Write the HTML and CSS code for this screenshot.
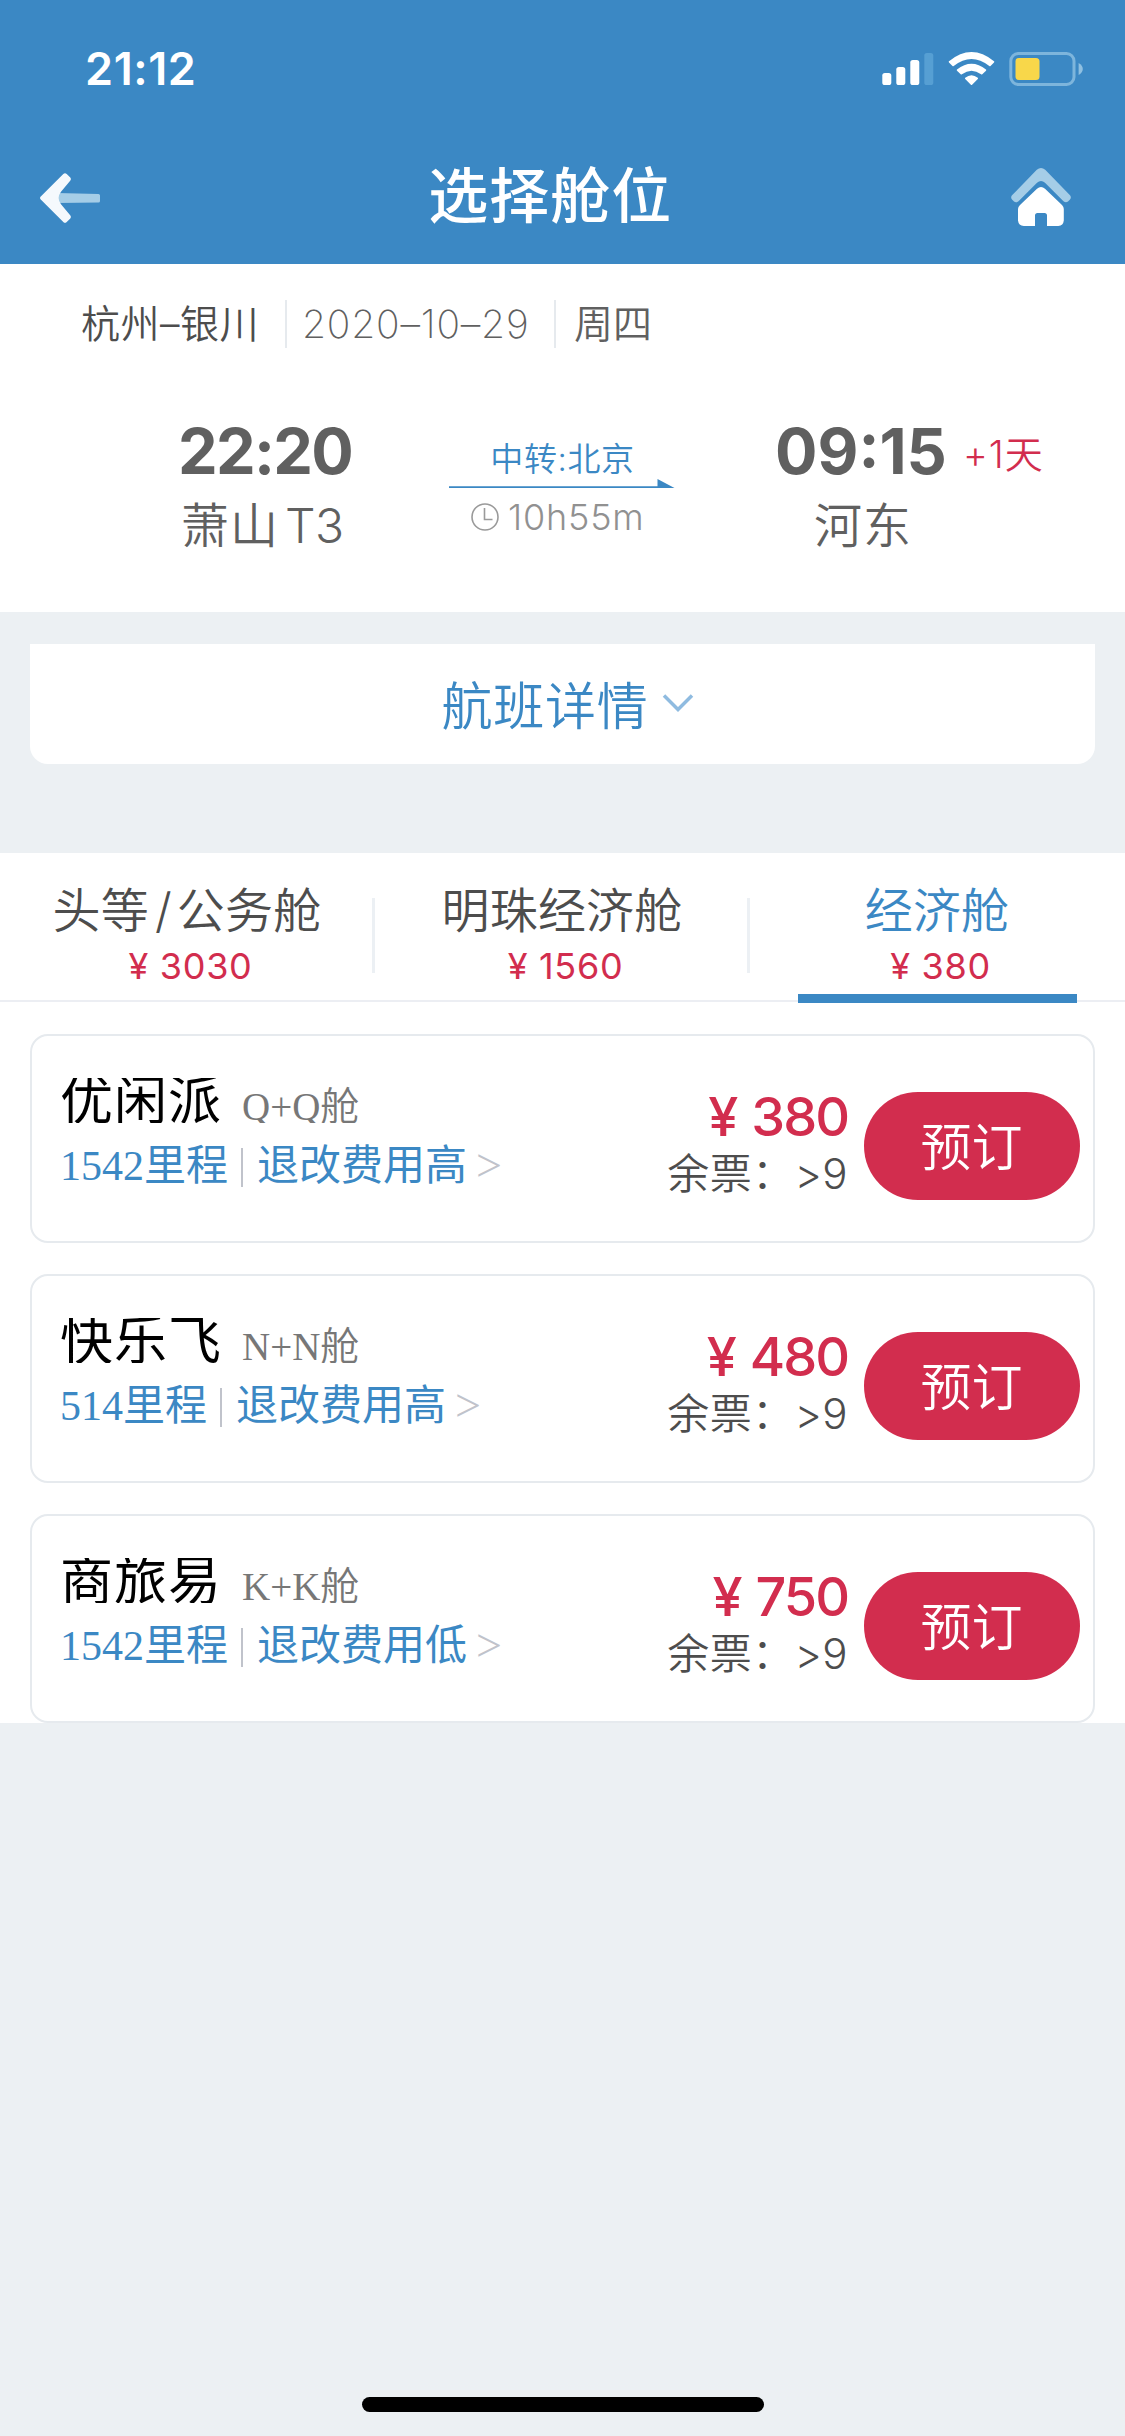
FILE: index.html
```html
<!DOCTYPE html>
<html lang="zh-CN">
<head>
<meta charset="utf-8">
<title>选择舱位</title>
<link rel="stylesheet" href="styles.css">
</head>
<body>
<div class="screen">
  <header class="header">
    <div class="status">
      <span class="clock-time">21:12</span>
      <svg class="status-icons" width="202" height="36" viewBox="882 51 202 36">
        <g fill="#fff">
          <rect x="882.3" y="73" width="9" height="12" rx="2.6"/>
          <rect x="896.3" y="67" width="9" height="18" rx="2.6"/>
          <rect x="910.3" y="60" width="9" height="25" rx="2.6"/>
        </g>
        <rect x="924.3" y="53" width="9" height="32" rx="2.6" fill="#569fd3"/>
        <path fill="#fff" d="M949 61.2Q971.5 42.8 994 61.2Q994.600 61.800 994 62.400L990.500 66Q989.900 66.500 989.300 66Q971.500 52 953.700 66Q953.100 66.500 952.500 66L949 62.400Q948.400 61.800 949 61.200Z"/>
        <path fill="#fff" d="M957 69.500Q971.500 58 986 69.500Q986.600 70.100 986 70.700L982.300 74.300Q981.700 74.800 981.100 74.300Q971.500 67.300 961.900 74.300Q961.300 74.800 960.700 74.300L957 70.700Q956.400 70.100 957 69.500Z"/>
        <path fill="#fff" d="M965.200 77.800Q971.500 72.500 977.800 77.800Q978.400 78.400 977.800 79L972.100 84.700Q971.500 85.300 970.900 84.700L965.200 79Q964.600 78.400 965.200 77.800Z"/>
        <rect x="1010.800" y="53.500" width="63.200" height="31" rx="7.500" fill="none" stroke="#7db5dc" stroke-width="3"/>
        <rect x="1015.500" y="58" width="24" height="22" rx="3.500" fill="#f8d74a"/>
        <path fill="#8fc0e1" d="M1078.600 63Q1082.800 65.500 1082.800 69T1078.600 75Z"/>
      </svg>
    </div>
    <div class="navbar">
      <svg class="back" width="62" height="52" viewBox="39 172 62 52">
        <path fill="#a5cde7" d="M57 193L98.500 194Q100 194 100 195.500V201Q100 202.500 98.500 202.500L57 203Z"/>
        <path fill="#f5f9fd" d="M40.500 196.800L63.300 174Q65 172.300 66.700 174L70.300 177.600Q71.600 179 70.400 180.600L61 191.800Q56.200 198 61 204.200L70.400 215.400Q71.600 217 70.300 218.400L66.700 222Q65 223.700 63.300 222L40.500 199.200Q39.400 198 40.500 196.800Z"/>
      </svg>
      <h1 class="title">选择舱位</h1>
      <svg class="home" width="62" height="60" viewBox="1010.500 167 62 60">
        <path fill="#a5cde7" d="M1037.300 169.800Q1041.500 166.200 1045.700 169.800L1070.500 195.300Q1072.200 197.500 1070.500 199.600L1068.500 201.600Q1066.300 203 1064 201.300L1045.500 182.800Q1041.500 179.400 1037.500 182.800L1019 201.300Q1016.700 203 1014.500 201.600L1012.500 199.600Q1010.800 197.500 1012.500 195.300Z"/>
        <path fill="#fff" d="M1037.500 188.700Q1041.500 185.500 1045.500 188.700L1062.500 205Q1064.300 206.800 1064.300 209V220.500Q1063.800 225.500 1058.800 226H1047.500V215.500Q1047.500 213 1045 213H1038Q1035.500 213 1035.500 215.500V226H1024.300Q1019 225.500 1018.500 220.500V209Q1018.500 206.800 1020.500 205Z"/>
      </svg>
    </div>
  </header>

  <section class="trip">
    <div class="trip-meta">
      <span class="route">杭州–银川</span>
      <span class="date">2020–10–29</span>
      <span class="weekday">周四</span>
    </div>
    <div class="flight">
      <div class="depart">
        <div class="time">22:20</div>
        <div class="place"><span>萧山</span><span class="terminal">T3</span></div>
      </div>
      <div class="middle">
        <div class="transfer">中转:北京</div>
        <svg class="flight-line" width="226" height="10" viewBox="0 0 226 10"><path fill="#3b88c4" d="M0 7.300H208.500V0L225.500 9H0Z"/></svg>
        <div class="duration">
          <svg width="28" height="28" viewBox="0 0 28 28" fill="none" stroke="#9a9a9a" stroke-width="1.600"><circle cx="14" cy="14" r="13"/><path d="M13.500 5V16.500H21.500"/></svg>
          <span>10h55m</span>
        </div>
      </div>
      <div class="arrive">
        <div class="time">09:15</div>
        <div class="place"><span>河东</span></div>
      </div>
      <div class="plus-day">+1天</div>
    </div>
  </section>

  <div class="details">
    <span>航班详情</span>
    <svg width="32" height="20" viewBox="0 0 32 20" fill="none" stroke="#8fbbe0" stroke-width="3.500"><path d="M2 2.500L16 16.500L30 2.500"/></svg>
  </div>

  <nav class="tabs">
    <div class="tab"><span class="cabin">头等<i class="slash">/</i>公务舱</span><span class="fare">¥ 3030</span></div>
    <div class="tab"><span class="cabin">明珠经济舱</span><span class="fare">¥ 1560</span></div>
    <div class="tab active"><span class="cabin">经济舱</span><span class="fare">¥ 380</span></div>
  </nav>

  <main class="list">
    <article class="card">
      <div class="product">
        <div class="name-row"><span class="name">优闲派</span><span class="class-code">Q+Q舱</span></div>
        <div class="rules"><span>1542里程</span><i class="bar"></i><span>退改费用高</span><span class="more">&gt;</span></div>
      </div>
      <div class="offer"><div class="price"><span class="yen">¥</span>380</div><div class="stock">余票：&gt;9</div></div>
      <div class="book">预订</div>
    </article>
    <article class="card">
      <div class="product">
        <div class="name-row"><span class="name">快乐飞</span><span class="class-code">N+N舱</span></div>
        <div class="rules"><span>514里程</span><i class="bar"></i><span>退改费用高</span><span class="more">&gt;</span></div>
      </div>
      <div class="offer"><div class="price"><span class="yen">¥</span>480</div><div class="stock">余票：&gt;9</div></div>
      <div class="book">预订</div>
    </article>
    <article class="card">
      <div class="product">
        <div class="name-row"><span class="name">商旅易</span><span class="class-code">K+K舱</span></div>
        <div class="rules"><span>1542里程</span><i class="bar"></i><span>退改费用低</span><span class="more">&gt;</span></div>
      </div>
      <div class="offer"><div class="price"><span class="yen">¥</span>750</div><div class="stock">余票：&gt;9</div></div>
      <div class="book">预订</div>
    </article>
  </main>
  <div class="home-indicator"></div>
</div>
</body>
</html>
```
FILE: styles.css
```css
* { box-sizing: border-box; }
body {
  margin: 0;
  background: #ecf0f3;
  font-family: Inter, "Noto Sans CJK SC", sans-serif;
  font-weight: 350;
  color: #4d4d4d;
}
i { font-style: normal; }
svg { display: block; flex: none; }
.screen {
  width: 1125px;
  height: 2436px;
  display: flex;
  flex-direction: column;
  white-space: nowrap;
  overflow: hidden;
}

/* header */
.header { height: 264px; background: #3b88c4; color: #fff; }
.status {
  height: 132px;
  padding: 6px 41px 0 85px;
  display: flex;
  justify-content: space-between;
  align-items: center;
}
.clock-time { font-size: 45px; font-weight: 600; line-height: 48px; letter-spacing: .6px; }
.navbar {
  height: 132px;
  padding: 0 53.500px 0 39px;
  display: flex;
  justify-content: space-between;
  align-items: center;
}
.title { margin: 0 10px 4px 0; font-size: 60px; font-weight: 500; line-height: 72px; letter-spacing: 1px; }
.home { margin-bottom: 2px; }

/* trip summary */
.trip { height: 348px; background: #fff; padding-top: 36px; }
.trip-meta { display: flex; height: 48px; line-height: 48px; font-size: 39px; padding-left: 81px; }
.route { width: 204px; letter-spacing: .5px; color: #4d4d4d; }
.date, .weekday { border-left: 2px solid #e6eaee; color: #606060; }
.date { width: 269px; padding-left: 15px; font-weight: 250; letter-spacing: .8px; }
.weekday { padding-left: 18px; }
.flight {
  display: grid;
  grid-template-columns: 269px 326px 188px auto;
  padding: 72px 0 0 180px;
  color: #606060;
}
.time { font-size: 63px; font-weight: 700; line-height: 62px; }
.depart .time { margin-left: -2px; letter-spacing: -1.700px; }
.place { display: flex; margin-top: 20px; font-size: 48px; line-height: 48px; gap: 6px; letter-spacing: 1px; }
.terminal { letter-spacing: -.5px; }
.depart .place { padding-left: 1px; }
.arrive .place { padding-left: 39px; }
.middle { padding-top: 18px; }
.transfer { width: 227px; text-align: center; font-size: 33px; line-height: 42px; color: #3b88c4; letter-spacing: .6px; }
.flight-line { margin-top: -1px; }
.duration {
  margin-top: 10px;
  padding-left: 22px;
  display: flex;
  align-items: center;
  gap: 9px;
  font-size: 36px;
  line-height: 36px;
  letter-spacing: .8px;
  color: #919191;
}
.plus-day { padding-top: 16px; font-size: 38px; line-height: 36px; letter-spacing: 1px; color: #d22d4e; }

/* details toggle */
.details {
  height: 120px;
  margin: 32px 30px 0;
  padding: 0 0 2px 11px;
  border-radius: 0 0 18px 18px;
  background: #fff;
  display: flex;
  justify-content: center;
  align-items: center;
  gap: 14px;
  font-size: 51px;
  letter-spacing: .7px;
  color: #3b88c4;
}

/* cabin tabs */
.tabs {
  height: 149px;
  margin-top: 89px;
  background: #fff;
  border-bottom: 2px solid #eceef3;
  display: grid;
  grid-template-columns: repeat(3, 375px);
}
.tab { position: relative; padding-top: 28px; display: flex; flex-direction: column; align-items: center; }
.tab:not(:last-child)::after {
  content: "";
  position: absolute;
  right: 0;
  top: 45px;
  width: 3px;
  height: 75px;
  background: #ecf0f4;
}
.cabin { margin-right: 1px; font-size: 48px; line-height: 60px; letter-spacing: .2px; }
.slash { margin: 0 5px 0 6px; }
.fare { margin: 7px 0 0 6px; font-size: 36px; line-height: 36px; letter-spacing: .7px; font-weight: 400; color: #d22d4e; }
.active .cabin { color: #3b88c4; }
.active::after {
  content: "";
  position: absolute;
  left: 48px;
  top: 141px;
  width: 279px;
  height: 9px;
  background: #3b88c4;
}

/* fare cards */
.list {
  background: #fff;
  padding: 32px 30px 0;
  display: flex;
  flex-direction: column;
  gap: 31px;
}
.card {
  height: 209px;
  border: 2px solid #e6eaee;
  border-radius: 18px;
  background: #fff;
  display: flex;
  padding: 0 13px 0 28px;
}
.product { flex: 1; padding-top: 42px; font-family: "Liberation Serif", "Noto Sans CJK SC", serif; }
.name-row { display: flex; height: 45px; overflow: hidden; }
.name { font: 400 53px/47px Inter, "Noto Sans CJK SC", sans-serif; letter-spacing: 1px; color: #000; }
.class-code { margin-left: 20px; font-size: 39px; line-height: 57px; font-weight: 350; color: #777; }
.rules { display: flex; align-items: center; height: 60px; margin-top: 13px; font-size: 42px; line-height: 60px; font-weight: 400; color: #3b88c4; }
.bar { width: 2px; height: 39px; background: #c0c3cb; margin: 2px 14px 0 13px; }
.more { margin-left: 9px; font-size: 46px; color: #c0c3cb; }
.offer { padding: 54px 16px 0 0; text-align: right; }
.price { font-size: 54px; line-height: 54px; font-weight: 500; color: #d22d4e; letter-spacing: -2px; }
.yen { margin-right: 15px; }
.stock { margin-top: 6px; font-size: 42px; line-height: 48px; letter-spacing: .4px; }
.book {
  width: 216px;
  height: 108px;
  margin-top: 56px;
  padding-right: 1px;
  border-radius: 54px;
  background: #d22d4e;
  color: #fff;
  font-size: 51px;
  line-height: 112px;
  text-align: center;
}
.home-indicator { width: 402px; height: 15px; margin: auto auto 24px; border-radius: 8px; background: #000; }
```
